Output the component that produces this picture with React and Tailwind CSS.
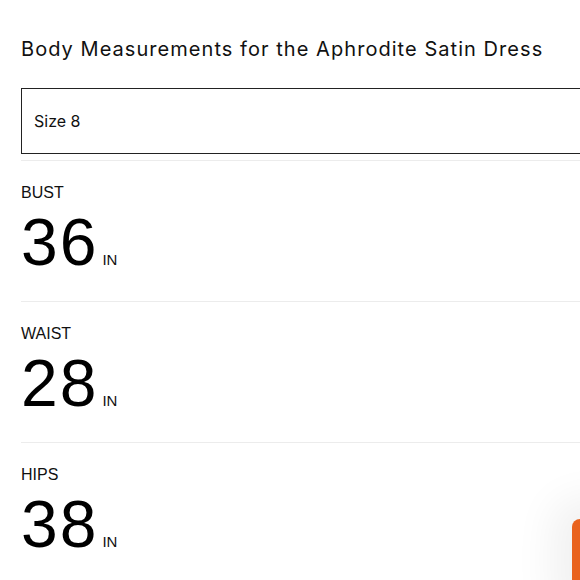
export default function App() {
  const rows = [
    { label: "BUST", value: "36" },
    { label: "WAIST", value: "28" },
    { label: "HIPS", value: "38" },
  ];
  return (
    <div className="relative w-[580px] h-[580px] overflow-hidden bg-white text-black" style={{ fontFamily: "Inter, 'Liberation Sans', sans-serif" }}>
      <div className="pl-[21px]">
        <h1 className="pt-[35px] text-[20px] leading-[28px] font-normal tracking-[1.05px] text-[#111]">
          Body Measurements for the Aphrodite Satin Dress
        </h1>
        <div className="mt-[25px] w-[600px] h-[66px] border-[1.5px] border-[#222] flex items-center pl-[12px] text-[16px] text-[#111]">
          Size 8
        </div>
        <div className="mt-[6px] border-t border-[#ececec]" />
        {rows.map((r, i) => (
          <div key={r.label} className={i > 0 ? "border-t border-[#ececec]" : ""}>
            <div className="h-[140px] pt-[23px]" style={{ fontFamily: "'Liberation Sans', Arial, sans-serif" }}>
              <div className="text-[16px] leading-[18px] text-[#111]">{r.label}</div>
              <div className="flex items-baseline mt-[6px]">
                <span className="text-[66px] leading-[68px] tracking-[2px] text-black">{r.value}</span>
                <span className="ml-[4px] text-[15px] text-[#111]">IN</span>
              </div>
            </div>
          </div>
        ))}
      </div>
      <div className="absolute left-[572px] top-[519px] w-[60px] h-[80px] rounded-[8px] bg-[#e9621d] shadow-[0_0_40px_20px_rgba(0,0,0,0.06)]" />
    </div>
  );
}
